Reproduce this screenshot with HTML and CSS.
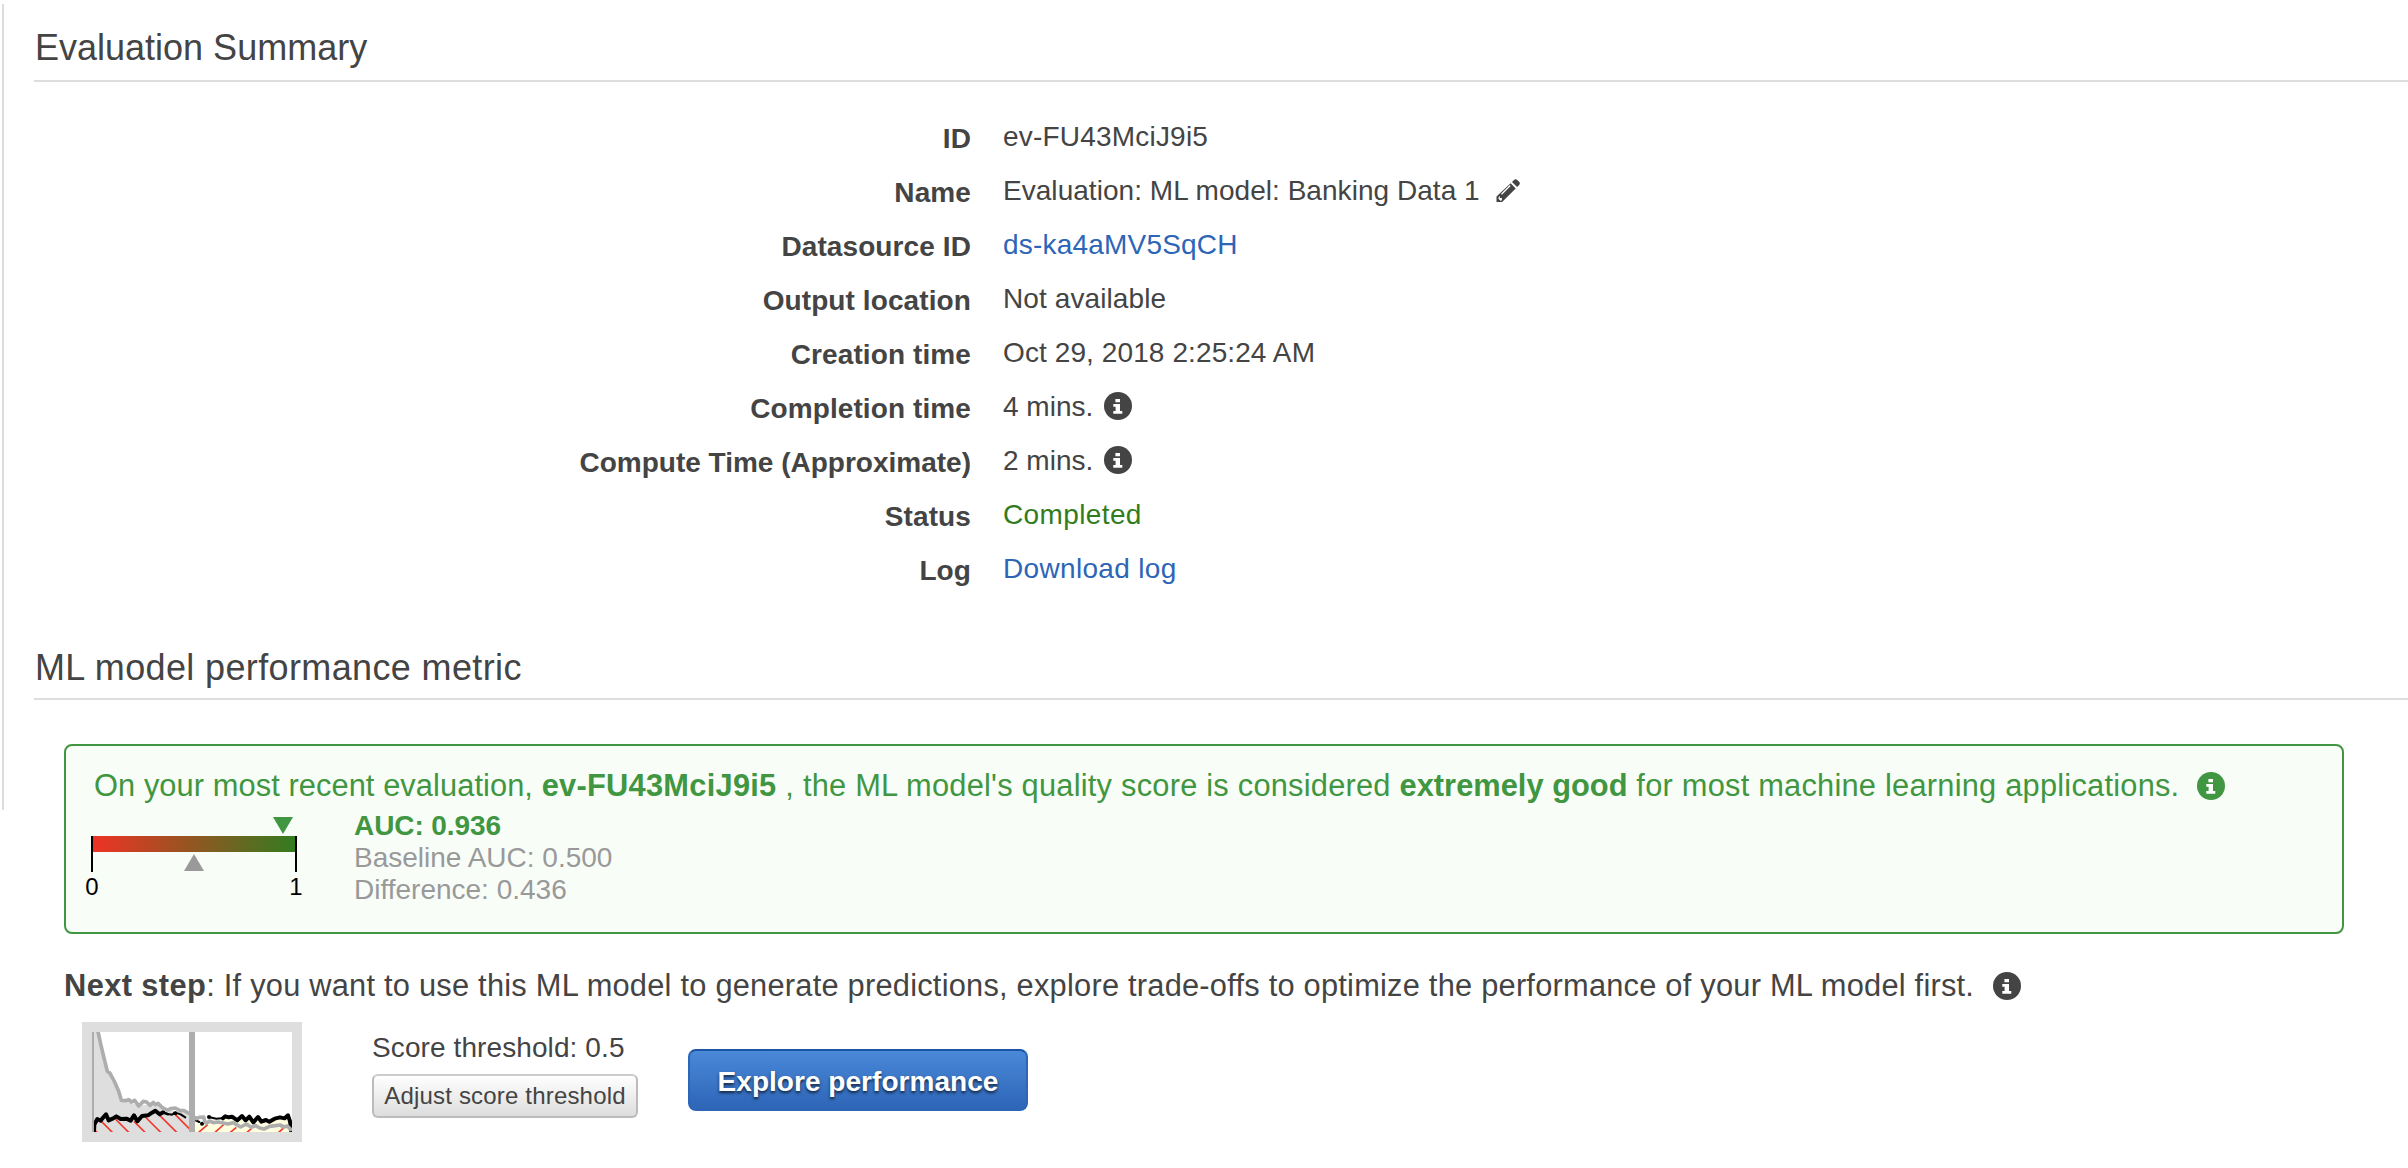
FILE: index.html
```html
<!DOCTYPE html>
<html lang="en">
<head>
<meta charset="utf-8">
<title>Evaluation Summary</title>
<link rel="stylesheet" href="styles.css">
</head>
<body>
<svg width="0" height="0" class="defs">
  <symbol id="info" viewBox="0 0 28 28">
    <circle cx="14" cy="14" r="14" fill="currentColor"/>
    <path fill="#fff" d="M11.4 7h4.6v3.3h-4.6zM9.3 12h6.7v7h2.3v2.7H9.3V19h2.3v-4.3H9.3z"/>
  </symbol>
</svg>
<div class="page">
  <div class="rail"></div>
  <main class="content">
    <h1 class="heading heading-summary">Evaluation Summary</h1>
    <dl class="details">
      <dt>ID</dt><dd class="ls-2">ev-FU43MciJ9i5</dd>
      <dt>Name</dt>
      <dd class="name"><span>Evaluation: ML model: Banking Data 1</span>
        <svg class="pencil" viewBox="0 0 24 24" width="24" height="24"><path fill="currentColor" d="M14.6 4.3l5.1 5.1L6.1 23H.5v-5.6zM16 2.9l2-2c1-1 2.200-1 3.200 0l1.900 1.900c1 1 1 2.200 0 3.200l-2 2z"/><path fill="none" stroke="#fff" stroke-width="1.300" d="M5.500 15.200l8.700-8.700"/><path fill="#fff" d="M2.600 17.900l1.200-.8v2h2.100v2l-1 .8-2.300-2z"/></svg>
      </dd>
      <dt>Datasource ID</dt><dd><a class="link ls-2" href="#">ds-ka4aMV5SqCH</a></dd>
      <dt>Output location</dt><dd class="ls-1">Not available</dd>
      <dt>Creation time</dt><dd class="ls-1">Oct 29, 2018 2:25:24 AM</dd>
      <dt>Completion time</dt><dd class="timed">4 mins.<svg class="info"><use href="#info"/></svg></dd>
      <dt class="tight">Compute Time (Approximate)</dt><dd class="timed">2 mins.<svg class="info"><use href="#info"/></svg></dd>
      <dt>Status</dt><dd class="status ls-4">Completed</dd>
      <dt>Log</dt><dd><a class="link ls-3" href="#">Download log</a></dd>
    </dl>
    <h2 class="heading heading-metric">ML model performance metric</h2>
    <section class="alert">
      <div class="message">
        <p class="sentence"><span class="intro">On your most recent evaluation, </span><b class="eval-id">ev-FU43MciJ9i5</b> , the ML model's quality score is considered <b class="grade">extremely good</b> for most machine learning applications.</p>
        <svg class="info"><use href="#info"/></svg>
      </div>
      <div class="metrics">
        <svg class="gauge" width="224" height="90" viewBox="0 0 224 90">
          <defs><linearGradient id="scale"><stop offset="0" stop-color="#ef3224"/><stop offset="1" stop-color="#327c20"/></linearGradient></defs>
          <rect x="8" y="26" width="204" height="16" fill="url(#scale)"/>
          <path fill="#000" d="M7 26h2v36H7zM211 26h2v36h-2z"/>
          <path fill="#419641" d="M189 7h20l-10 17z"/>
          <path fill="#999" d="M100 61h20l-10-17z"/>
          <text x="8" y="85" text-anchor="middle">0</text>
          <text x="212" y="85" text-anchor="middle">1</text>
        </svg>
        <div class="scores">
          <div class="auc">AUC: 0.936</div>
          <div>Baseline AUC: 0.500</div>
          <div>Difference: 0.436</div>
        </div>
      </div>
    </section>
    <div class="message next">
      <p class="sentence"><b class="step">Next step</b>: If you want to use this ML model to generate predictions, explore trade-offs to optimize the performance of your ML model first.</p>
      <svg class="info"><use href="#info"/></svg>
    </div>
    <div class="actions">
      <svg class="chart" width="220" height="120" viewBox="-18 -18 660 360">
        <defs><clipPath id="plot"><rect x="12" y="12" width="600" height="300"/></clipPath></defs>
        <rect x="-18" y="-18" width="660" height="360" fill="#dedede"/>
        <rect x="12" y="12" width="600" height="300" fill="#fff"/>
        <g clip-path="url(#plot)" fill="none" stroke-linejoin="round" stroke-linecap="round">
          <path fill="#dedede" d="M12 12H30L38 48 48 90 60 134 66 136 80 162 92 190 100 217 152 232 202 230 240 246 303 256V312H12z"/>
          <path fill="#ffffe0" d="M321 275L350 285 400 280 412 268 462 266 496 280 555 278 600 266 610 312H321z"/>
          <path stroke="#ee3b2c" stroke-width="5" stroke-linecap="butt" d="M14 300l14 14M38 278l38 38M82 273l42 42M138 280l34 34M172 267l47 47M215 262l54 54M262 260l50 50M331 314l28-24M380 314l29-26M426 314l19-16M476 314l14-12M571 314l16-14"/>
          <path stroke="#000" stroke-width="12" d="M18 310L19 290 28 273 38 278 46 268 54 259 62 277 74 272 85 265 98 273 115 272 128 278 138 262 148 280 162 264 180 262 192 254 202 248 215 259 226 253"/>
          <path stroke="#000" stroke-width="6" d="M226 253L240 258 252 260 262 254 278 259 292 268M321 276L334 282M362 267L385 272 400 271"/>
          <path stroke="#000" stroke-width="12" d="M342 287h.1M262 256h.1M363 267h.1M405 271L412 265 422 268 432 266 448 277 462 264 473 277 484 266 496 283 510 267 520 281 534 276 544 281 560 272 576 268 590 271 600 262 606 280 610 312"/>
          <path stroke="#adadad" stroke-width="11" d="M29 6L38 48 48 90 58 130 66 136 80 162 92 190 100 217 112 218 122 215 130 222 140 217 152 234 166 220 176 222 186 232 196 223 202 230 210 226 222 238 232 244 240 246 248 242 262 240 276 248 288 248 303 256 325 272 334 268 347 267 350 280 355 286 365 279 376 284 390 282 405 285 420 288 435 284 458 297 475 288 490 298 503 293 515 300 528 303 545 295 562 293 576 291 588 297 598 294 608 304"/>
          <path stroke="#000" stroke-width="7" d="M226 254L240 259M258 256L264 257"/>
        </g>
        <path fill="#adadad" d="M12 12h6v300h-6zM303 12h18v300h-18z"/>
      </svg>
      <div class="threshold">
        <div class="ls-1">Score threshold: 0.5</div>
        <button class="adjust">Adjust score threshold</button>
      </div>
      <button class="explore">Explore performance</button>
    </div>
  </main>
</div>
</body>
</html>
```
FILE: styles.css
```css
* { box-sizing: border-box; }
body {
  margin: 0;
  background: #fff;
  color: #444;
  font: 28px/54px "Liberation Sans", Arial, sans-serif;
  overflow: hidden;
}
.defs { display: none; }
.page { display: flex; height: 1168px; }
.rail { flex: none; width: 2px; height: 806px; margin: 4px 0 0 2px; background: #ddd; }
.content { flex: 1; margin-left: 30px; }

.heading { margin: 0; padding-left: 1px; border-bottom: 2px solid #ddd; font-size: 36px; font-weight: 400; }
.heading-summary { height: 82px; padding-top: 20px; line-height: 55px; }
.heading-metric { height: 105px; padding-top: 46px; line-height: 54px; letter-spacing: .37px; }

.details {
  display: grid;
  grid-template-columns: 937px 1fr;
  grid-auto-rows: 54px;
  column-gap: 32px;
  margin: 27px 0 0;
}
dt { padding-top: 3px; text-align: right; font-weight: 700; letter-spacing: .1px; }
.tight { letter-spacing: 0; }
dd { margin: 0; padding-top: 1px; }
.name { display: flex; align-items: center; gap: 16px; letter-spacing: .04px; }
.timed { display: flex; align-items: center; gap: 11px; }
.timed .info { margin-top: -1px; }
.info { flex: none; width: 28px; height: 28px; }
.link { color: #2d65b7; text-decoration: none; }
.status { color: #327c20; }
.ls-1 { letter-spacing: .1px; }
.ls-2 { letter-spacing: .2px; }
.ls-3 { letter-spacing: .33px; }
.ls-4 { letter-spacing: .38px; }

.alert {
  width: 2280px;
  height: 190px;
  margin: 44px 0 0 30px;
  padding: 20px 28px 0;
  border: 2px solid #419641;
  border-radius: 8px;
  background: #f8fdf8;
  color: #419641;
}
.message { display: flex; align-items: flex-start; gap: 18px; font-size: 30.8px; line-height: 40px; }
.message .info { margin-top: 6px; }
.sentence { margin: 0; letter-spacing: .23px; white-space: nowrap; }
.intro { letter-spacing: .08px; }
.eval-id { letter-spacing: .27px; }
.grade { letter-spacing: .03px; }
.step { letter-spacing: .4px; }
.metrics { display: flex; gap: 46px; margin: 4px 0 0 -10px; }
.gauge text { font-size: 24px; fill: #000; }
.scores { color: #999; line-height: 32px; }
.auc { color: #419641; font-weight: 700; letter-spacing: -.09px; }

.next { gap: 19px; margin: 32px 0 0 30px; }
.actions { display: flex; align-items: flex-start; margin: 16px 0 0 48px; }
.threshold { margin: 9px 50px 0 70px; line-height: 34px; }
button { display: block; padding: 0; font-family: inherit; white-space: nowrap; }
.adjust {
  width: 266px;
  height: 44px;
  margin-top: 9px;
  border: 2px solid #bbb;
  border-top-color: #ccc;
  border-radius: 6px;
  background: linear-gradient(#fff, #ddd);
  color: #444;
  font-size: 24px;
  letter-spacing: .18px;
  line-height: 38px;
}
.explore {
  width: 340px;
  height: 62px;
  margin-top: 27px;
  border: 2px solid #2d65b7;
  border-top-color: #1c53a4;
  border-radius: 8px;
  background: linear-gradient(#4a88d8, #2d65b7);
  color: #fff;
  font-size: 28px;
  font-weight: 700;
  letter-spacing: .04px;
  line-height: 58px;
  padding-top: 2px;
  text-shadow: 0 2px 3px rgba(0, 0, 0, .7);
}
```
